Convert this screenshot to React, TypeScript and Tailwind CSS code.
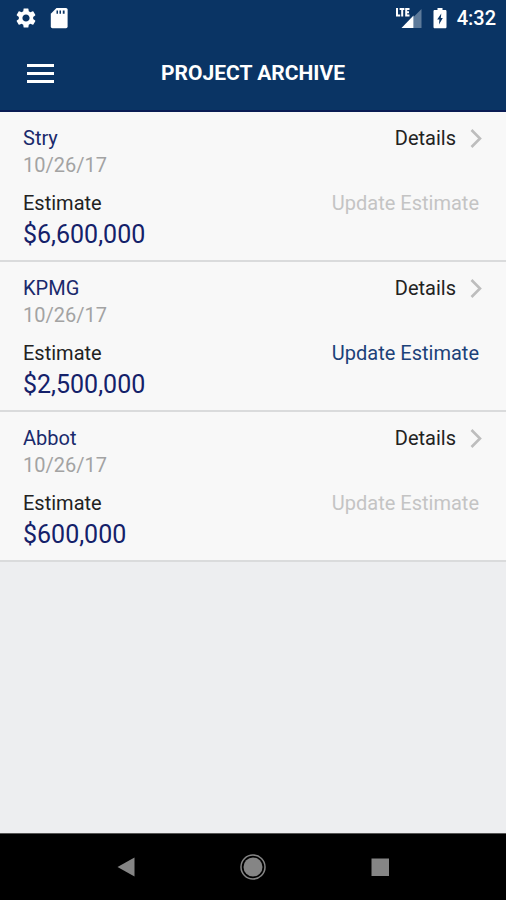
import { MdSettings } from 'react-icons/md'

type Project = {
  name: string
  date: string
  estimate: string
  canUpdate: boolean
}

const projects: Project[] = [
  { name: 'Stry', date: '10/26/17', estimate: '$6,600,000', canUpdate: false },
  { name: 'KPMG', date: '10/26/17', estimate: '$2,500,000', canUpdate: true },
  { name: 'Abbot', date: '10/26/17', estimate: '$600,000', canUpdate: false },
]

function SdCardIcon() {
  return (
    <svg width="18" height="22" viewBox="0 0 18 22" aria-hidden="true">
      <path fill="#fff" d="M6.5 1H16a1.6 1.6 0 0 1 1.6 1.6v17a1.6 1.6 0 0 1-1.600 1.600H2.400A1.600 1.600 0 0 1 .8 19.600V6.700z" />
      <path fill="#0a3464" d="M6.500 3.500H8v3.200H6.500zM9.500 3.500H11v3.200H9.500zM12.800 3.500h1.800v3.200h-1.800z" />
    </svg>
  )
}

function SignalIcon() {
  return (
    <svg width="28" height="22" viewBox="0 0 28 22" aria-hidden="true">
      <path fill="#5d7a9a" d="M26.500 2v19h-8V10z" />
      <path fill="#fff" d="M18.500 8.500V21H6.500z" />
      <path stroke="#fff" strokeWidth="2" fill="none" d="M2 1v7.500h3.200M4.600 2h4.800M7.200 2v7.500M14.500 2h-3.300v6.500h3.300M11 5.300h3" />
    </svg>
  )
}

function BatteryIcon() {
  return (
    <svg width="14" height="22" viewBox="0 0 14 22" aria-hidden="true">
      <path fill="#fff" d="M4.500 1h5v2h2.700c.8 0 1.300.5 1.300 1.300v15.600c0 .8-.5 1.300-1.300 1.300H1.800c-.8 0-1.300-.5-1.300-1.300V4.300C.5 3.500 1 3 1.800 3h2.700z" />
      <path fill="#0a3464" d="M8.300 6.500L7.800 11h2L6 17.500l.4-5H4.200z" />
    </svg>
  )
}

function StatusBar() {
  return (
    <div className="flex h-9 items-center justify-between pr-2.5 pl-3.5">
      <div className="flex items-center gap-3">
        <MdSettings className="size-6 text-white" />
        <SdCardIcon />
      </div>
      <div className="flex items-center">
        <SignalIcon />
        <span className="ml-2.5">
          <BatteryIcon />
        </span>
        <span className="ml-2.5 text-[20px] leading-6 font-medium">4:32</span>
      </div>
    </div>
  )
}

function ProjectRow({ project }: { project: Project }) {
  return (
    <li className="flex justify-between border-b-2 border-[#dadbdc] bg-[#f8f8f8] pt-[13px] pr-6 pb-[7px] pl-[23px]">
      <div>
        <h2 className="text-[20px] leading-[27px] text-[#1a2a6c]">{project.name}</h2>
        <p className="text-[20px] leading-[27px] text-[#a3a3a3]">{project.date}</p>
        <p className="mt-[11px] text-[20px] leading-[27px] text-[#222222]">Estimate</p>
        <p className="text-[25px] leading-[36px] text-[#14216a]">{project.estimate}</p>
      </div>
      <div className="flex flex-col items-end">
        <a href="#details" className="flex items-center gap-3.5 text-[20px] leading-[27px] text-[#222222]">
          Details
          <svg width="12" height="20" viewBox="0 0 12 20" fill="none" aria-hidden="true">
            <path d="M1.500 1L10 9.500 1.500 18" stroke="#bdbdbd" strokeWidth="2.600" />
          </svg>
        </a>
        <button
          type="button"
          disabled={!project.canUpdate}
          className="mt-[38px] mr-[3px] text-[20px] leading-[27px] text-[#1c4279] disabled:text-[#c4c4c4]"
        >
          Update Estimate
        </button>
      </div>
    </li>
  )
}

export default function App() {
  return (
    <div className="flex min-h-screen flex-col bg-[#edeef0] font-[Roboto,sans-serif]">
      <header className="border-b-2 border-[#0a1c54] bg-[#0a3464] text-white">
        <StatusBar />
        <div className="grid h-[74px] grid-cols-[1fr_auto_1fr] items-center px-[27px]">
          <button type="button" aria-label="Open menu" className="flex w-[27px] flex-col gap-[5px]">
            <span className="h-[3px] w-full bg-white" />
            <span className="h-[3px] w-full bg-white" />
            <span className="h-[3px] w-full bg-white" />
          </button>
          <h1 className="text-[21px] leading-6 font-bold">PROJECT ARCHIVE</h1>
        </div>
      </header>

      <main className="flex-1">
        <ul>
          {projects.map((project) => (
            <ProjectRow key={project.name} project={project} />
          ))}
        </ul>
      </main>

      <nav className="flex h-[67px] items-center justify-center gap-[101px] border-t border-[#555555] bg-black">
        <button type="button" aria-label="Back">
          <svg width="26" height="26" viewBox="0 0 26 26" aria-hidden="true">
            <path fill="#858585" d="M21.500 3.500v19L4.500 13z" />
          </svg>
        </button>
        <button type="button" aria-label="Home">
          <svg width="26" height="26" viewBox="0 0 26 26" aria-hidden="true">
            <circle cx="13" cy="13" r="12" fill="none" stroke="#858585" strokeWidth="1.500" />
            <circle cx="13" cy="13" r="9.500" fill="#858585" />
          </svg>
        </button>
        <button type="button" aria-label="Recent apps">
          <svg width="26" height="26" viewBox="0 0 26 26" aria-hidden="true">
            <path fill="#858585" d="M4.500 4.500H22V22H4.500z" />
          </svg>
        </button>
      </nav>
    </div>
  )
}
